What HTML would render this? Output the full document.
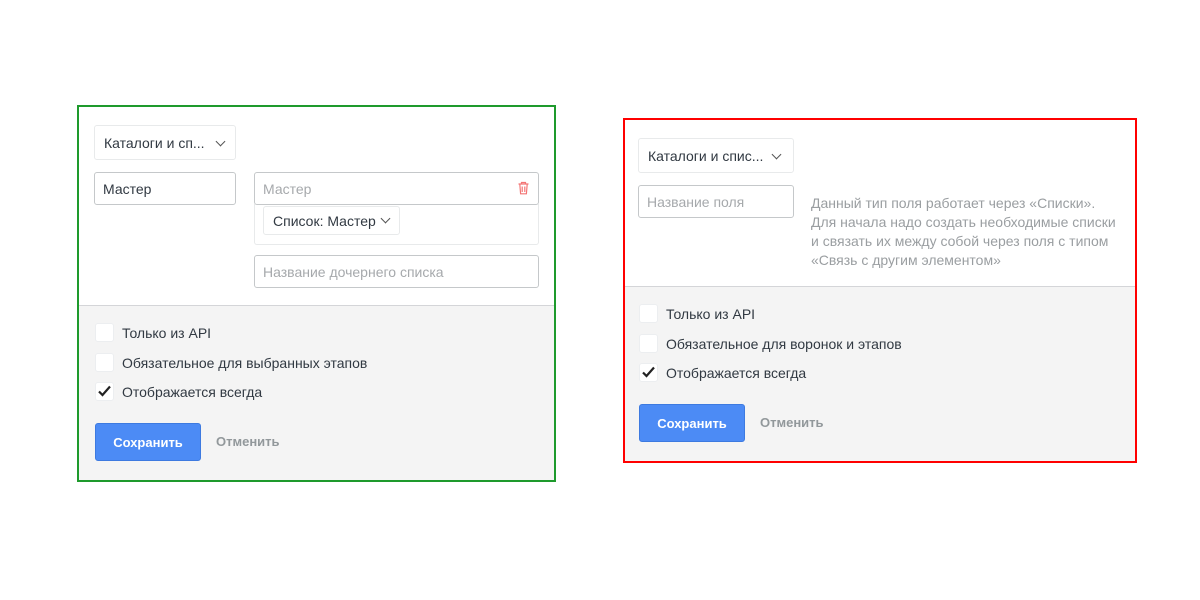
<!DOCTYPE html>
<html><head><meta charset="utf-8"><style>
*{box-sizing:border-box;margin:0;padding:0}
body{width:1200px;height:600px;background:#fff;position:relative;font-family:"Liberation Sans",sans-serif;font-size:14px;color:#313942;overflow:hidden}
.a{position:absolute}
.box{position:absolute;background:#fff}
.gray{position:absolute;background:#f4f4f4;border-top:1px solid #d4d5d8}
.sel{position:absolute;border:1px solid #e8eaeb;border-radius:3px;background:#fff;display:flex;align-items:center;padding-left:9px;font-size:14px;color:#313942}
.inp{position:absolute;border:1px solid #c5c8ca;border-radius:3px;background:#fff;display:flex;align-items:center;padding-left:8px;font-size:14px}
.ph{color:#a6a9ac}
.chev{position:absolute;width:7px;height:7px;border-right:1.3px solid #555;border-bottom:1.3px solid #555;transform:rotate(45deg)}
.cb{position:absolute;width:19px;height:19px;background:#fff;border:1px solid #eceef0;border-radius:3px}
.lbl{position:absolute;font-size:14px;color:#313942}
.btn{position:absolute;background:#4c8bf5;border:1px solid #3d7ae0;border-radius:3px;color:#fff;font-weight:bold;font-size:13px;display:flex;align-items:center;justify-content:center}
.cancel{position:absolute;color:#92989b;font-weight:bold;font-size:13px}
</style></head><body>

<!-- green -->
<div class="a" style="left:77px;top:105px;width:479px;height:377px;border:2px solid #1e9a2c"></div>
<div class="box" style="left:79px;top:107px;width:475px;height:198px"></div>
<div class="gray" style="left:79px;top:305px;width:475px;height:175px"></div>
<div class="sel" style="left:94px;top:125px;width:142px;height:35px">Каталоги и сп...</div>
<div class="chev" style="left:217px;top:138px"></div>
<div class="inp" style="left:94px;top:172px;width:142px;height:33px">Мастер</div>
<div class="a" style="left:254px;top:204px;width:285px;height:41px;border:1px solid #e8eaeb;border-top:none;border-radius:0 0 3px 3px"></div>
<div class="inp" style="left:254px;top:172px;width:285px;height:33px"><span class="ph">Мастер</span></div>
<svg class="a" style="left:517px;top:181px" width="13" height="14" viewBox="0 0 13 14"><path d="M1.5 3h10M4.5 3V1.5h4V3M2.8 3l.8 9.8h5.8l.8-9.8M5.2 5.5v5.5M7.8 5.5v5.5" fill="none" stroke="#f37575" stroke-width="1.2"/></svg>
<div class="sel" style="left:263px;top:206px;width:137px;height:29px;padding-left:9px">Список: Мастер</div>
<div class="chev" style="left:382px;top:215px"></div>
<div class="inp" style="left:254px;top:255px;width:285px;height:33px"><span class="ph">Название дочернего списка</span></div>
<div class="cb" style="left:95px;top:323px"></div><div class="lbl" style="left:122px;top:325px">Только из API</div>
<div class="cb" style="left:95px;top:353px"></div><div class="lbl" style="left:122px;top:355px">Обязательное для выбранных этапов</div>
<div class="cb" style="left:95px;top:382px"></div><div class="lbl" style="left:122px;top:384px">Отображается всегда</div>
<svg class="a" style="left:97px;top:384px" width="15" height="14"><path d="M2 7.5l3.5 3.5L13 2.5" fill="none" stroke="#222" stroke-width="2.2"/></svg>
<div class="btn" style="left:95px;top:423px;width:106px;height:38px">Сохранить</div>
<div class="cancel" style="left:216px;top:434px">Отменить</div>

<!-- red -->
<div class="a" style="left:623px;top:118px;width:514px;height:345px;border:2px solid #f00"></div>
<div class="box" style="left:625px;top:120px;width:510px;height:166px"></div>
<div class="gray" style="left:625px;top:286px;width:510px;height:175px"></div>
<div class="sel" style="left:638px;top:138px;width:156px;height:35px">Каталоги и спис...</div>
<div class="chev" style="left:773px;top:151px"></div>
<div class="inp" style="left:638px;top:185px;width:156px;height:33px"><span class="ph">Название поля</span></div>
<div class="a" style="left:811px;top:194px;font-size:14px;line-height:19px;color:#9a9ea1;width:320px;white-space:nowrap">Данный тип поля работает через «Списки».<br>Для начала надо создать необходимые списки<br>и связать их между собой через поля с типом<br>«Связь с другим элементом»</div>
<div class="cb" style="left:639px;top:304px"></div><div class="lbl" style="left:666px;top:306px">Только из API</div>
<div class="cb" style="left:639px;top:334px"></div><div class="lbl" style="left:666px;top:336px">Обязательное для воронок и этапов</div>
<div class="cb" style="left:639px;top:363px"></div><div class="lbl" style="left:666px;top:365px">Отображается всегда</div>
<svg class="a" style="left:641px;top:365px" width="15" height="14"><path d="M2 7.5l3.5 3.5L13 2.5" fill="none" stroke="#222" stroke-width="2.2"/></svg>
<div class="btn" style="left:639px;top:404px;width:106px;height:38px">Сохранить</div>
<div class="cancel" style="left:760px;top:415px">Отменить</div>
</body></html>
